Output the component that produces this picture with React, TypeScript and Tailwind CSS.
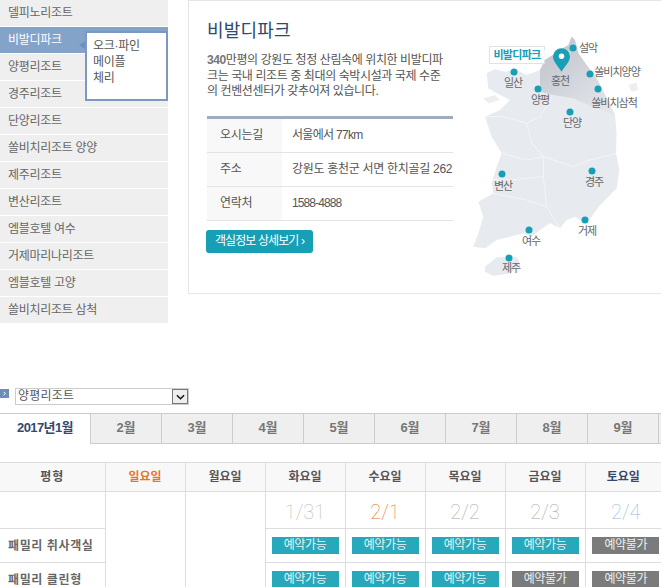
const resorts = [
  "델피노리조트",
  "비발디파크",
  "양평리조트",
  "경주리조트",
  "단양리조트",
  "쏠비치리조트 양양",
  "제주리조트",
  "변산리조트",
  "엠블호텔 여수",
  "거제마리나리조트",
  "엠블호텔 고양",
  "쏠비치리조트 삼척",
];

const months = ["2월", "3월", "4월", "5월", "6월", "7월", "8월", "9월"];

const info = [
  { label: "오시는길", value: "서울에서 77km", track: "tracking-[-0.7px]" },
  { label: "주소", value: "강원도 홍천군 서면 한치골길 262", track: "tracking-[-0.3px]" },
  { label: "연락처", value: "1588-4888", track: "tracking-[-0.9px]" },
];

// dot and label centres, relative to the map box
const pins = [
  { name: "설악", x: 113, y: 28, lx: 128, ly: 28 },
  { name: "쏠비치양양", x: 130, y: 54, lx: 157, ly: 52 },
  { name: "쏠비치삼척", x: 138, y: 69, lx: 154, ly: 83 },
  { name: "일산", x: 54, y: 52, lx: 53, ly: 63 },
  { name: "양평", x: 78, y: 69, lx: 80, ly: 80 },
  { name: "단양", x: 110, y: 92, lx: 112, ly: 103 },
  { name: "경주", x: 132, y: 151, lx: 134, ly: 162 },
  { name: "변산", x: 42, y: 154, lx: 43, ly: 166 },
  { name: "거제", x: 125, y: 200, lx: 127, ly: 211 },
  { name: "여수", x: 69, y: 210, lx: 71, ly: 221 },
  { name: "제주", x: 49, y: 238, lx: 51, ly: 248 },
];

function KoreaMap() {
  return (
    <svg viewBox="0 0 603 810" width="201" height="270" className="block">
      <defs>
        <linearGradient id="gangwon" x1="0.25" y1="0.1" x2="0.9" y2="0.9">
          <stop offset="0" stopColor="#c4c8ce" />
          <stop offset="1" stopColor="#e2e5ea" />
        </linearGradient>
      </defs>
      <path
        d="M80 160 105 148 135 155 170 150 200 165 240 150 255 120 300 90 325 75 335 50 345 60 355 100 380 135 410 175 440 235 465 285 470 340 468 400 478 450 470 505 445 530 420 555 395 590 375 610 345 590 320 600 300 625 270 610 240 630 215 650 190 640 150 650 110 660 75 685 40 680 55 640 70 590 55 545 100 520 95 490 110 440 125 400 95 350 75 290 120 270 150 240 120 225 85 205Z"
        fill="#e7eaee"
      />
      <path
        d="M240 150 255 120 300 90 325 75 335 50 345 60 355 100 380 135 410 175 440 235 465 285 400 262 340 235 280 225 240 215Z"
        fill="url(#gangwon)"
      />
      <path d="M75 740 110 712 170 712 182 735 150 760 100 768 75 755Z" fill="#e7eaee" />
      <path d="M505 195 530 188 535 210 515 215Z" fill="#eceef1" />
      <path d="M70 235 105 225 120 240 85 250Z" fill="#eceef1" />
      <path
        d="M75 290 130 290 200 310 240 290 280 225M200 310 215 370 250 410 200 420 125 400M250 410 250 470 260 560 300 625M250 410 340 440 390 420 468 400M250 470 150 480 95 480M100 520 200 540 260 560"
        fill="none"
        stroke="#f5f6f8"
        strokeWidth="3"
      />
    </svg>
  );
}

function Status({ open }: { open: boolean }) {
  return (
    <div
      className={`mx-auto flex h-[17px] w-[67px] items-center justify-center pb-px text-[12px] tracking-[-0.4px] text-[#e6f2f4] ${open ? "bg-[#27a8bb]" : "bg-[#7b7b7b]"}`}
    >
      {open ? "예약가능" : "예약불가"}
    </div>
  );
}

export default function App() {
  return (
    <div className="h-[587px] w-[661px] overflow-hidden bg-white font-['Liberation_Sans','Noto_Sans_CJK_KR',sans-serif] text-[12px] text-[#555]">
      <div className="flex h-[388px] items-start">
        {/* Resort menu */}
        <div className="relative w-[168px] shrink-0">
          {resorts.map((r) => (
            <div
              key={r}
              className={`flex h-[27px] items-center border-b border-white pb-px pl-2 tracking-[-0.3px] ${r === "비발디파크" ? "bg-[#84a3c9] text-white" : "bg-[#efefef] text-[#666]"}`}
            >
              {r}
            </div>
          ))}
          <div className="absolute left-[85px] top-[31px] h-[70px] w-[83px] border-2 border-[#7d99c1] bg-white pl-[6px] pt-[5px] leading-[16px] tracking-[-0.3px] text-[#555]">
            <p>오크·파인</p>
            <p>메이플</p>
            <p>체리</p>
            <span className="absolute -left-[8px] top-[8px] h-0 w-0 border-y-[4px] border-r-[6px] border-y-transparent border-r-[#6c90bd]" />
          </div>
        </div>

        {/* Resort info */}
        <div className="ml-5 flex h-[294px] flex-1 border-b border-l border-t border-[#e6e6e6]">
          <div className="ml-[18px] w-[246px] shrink-0">
            <h2 className="mt-[19px] text-[18px] leading-[22px] tracking-[0.2px] text-[#2c4a70]">비발디파크</h2>
            <p className="mt-[11px] whitespace-nowrap leading-[15.5px] tracking-[-0.4px] text-[#555]">
              <b className="text-[#777]">340</b>만평의 강원도 청정 산림속에 위치한 비발디파
              <br />
              크는 국내 리조트 중 최대의 숙박시설과 국제 수준
              <br />의 컨벤션센터가 갖추어져 있습니다.
            </p>
            <dl className="mt-[16px] border-t-[3px] border-[#9eadbd]">
              {info.map((row) => (
                <div key={row.label} className="flex h-[34px] border-b border-[#e3e3e3]">
                  <dt className="flex w-[75px] items-center bg-[#f8f8f8] pl-[13px] tracking-[-0.3px]">{row.label}</dt>
                  <dd className={`flex flex-1 items-center whitespace-nowrap pl-[10px] ${row.track}`}>{row.value}</dd>
                </div>
              ))}
            </dl>
            <button className="-ml-px mt-[9px] flex h-[23px] w-[107px] items-center justify-center rounded-[3px] bg-[#17a0b5] text-[12px] tracking-[-0.9px] text-white">
              객실정보 상세보기 ›
            </button>
          </div>
          <div className="relative ml-[7px] mt-[19px] h-[270px] w-[201px] shrink-0">
            <KoreaMap />
            {pins.map((p) => (
              <div key={p.name}>
                <span
                  className="absolute h-[7px] w-[7px] -translate-x-1/2 -translate-y-1/2 rounded-full bg-[#17a0b5]"
                  style={{ left: p.x, top: p.y }}
                />
                <span
                  className="absolute -translate-x-1/2 -translate-y-1/2 whitespace-nowrap text-[11px] leading-[13px] tracking-[-1px] text-[#666]"
                  style={{ left: p.lx, top: p.ly }}
                >
                  {p.name}
                </span>
              </div>
            ))}
            <span className="absolute left-[91px] top-[55px] text-[11px] leading-[13px] tracking-[-1px] text-[#666]">홍천</span>
            <div className="absolute left-[29px] top-[26px] flex h-[18px] w-[56px] items-center justify-center border border-[#e2e2e2] bg-white text-[11px] font-bold tracking-[-0.7px] text-[#17a0b5]">
              비발디파크
              <span className="absolute -right-[5px] top-[3px] h-0 w-0 border-y-[5px] border-l-[5px] border-y-transparent border-l-white" />
            </div>
            <svg viewBox="0 0 16 22" width="17" height="24" className="absolute left-[93px] top-[28px]">
              <path d="M8 0a8 8 0 0 1 8 8c0 4-4 8-8 14C4 16 0 12 0 8a8 8 0 0 1 8-8Z" fill="#17a0b5" />
              <circle cx="8" cy="7.5" r="2.6" fill="#fff" />
            </svg>
          </div>
        </div>
      </div>

      {/* Resort select */}
      <div className="flex h-[25px] items-start">
        <span className="mt-px flex h-[9px] w-[9px] items-center justify-center bg-[#6a8fbc]">
          <svg viewBox="0 0 6 6" width="5" height="5">
            <path d="M2 1l2 2-2 2" fill="none" stroke="#fff" strokeWidth="1.2" />
          </svg>
        </span>
        <div className="ml-[6px] flex h-[17px] w-[174px] items-center justify-between border border-[#ccc] pb-px pl-[2px] tracking-[0.2px] text-[#555]">
          양평리조트
          <span className="mt-px flex h-[15px] w-[16px] items-center justify-center border border-[#777] bg-[#eee]">
            <svg viewBox="0 0 10 6" width="9" height="6">
              <path d="M1 1l4 4 4-4" fill="none" stroke="#111" strokeWidth="1.6" />
            </svg>
          </span>
        </div>
      </div>

      {/* Month tabs */}
      <div className="flex h-[31px] border-t border-[#ccc] text-[13px] font-bold text-[#777]">
        <div className="flex w-[91px] items-center justify-center border-r border-[#ccc] pb-[2px] tracking-[-0.6px] text-[#34496e]">2017년1월</div>
        {months.map((m) => (
          <div key={m} className="flex w-[71px] items-center justify-center border-b border-r border-[#ccc] bg-[#efefef] pb-[2px]">
            {m}
          </div>
        ))}
        <div className="flex-1 border-b border-[#ccc] bg-[#efefef]" />
      </div>

      {/* Availability table */}
      <table className="mt-[18px] w-[661px] table-fixed border-collapse">
        <thead>
          <tr className="h-[29px] border-y border-[#ddd] bg-[#f8f8f8] font-bold">
            <th className="w-[105px] border-r border-[#ddd] text-[12px] tracking-[1px] text-[#555]">평형</th>
            <th className="w-[80px] border-r border-[#ddd] text-[12px] text-[#e5762a]">일요일</th>
            <th className="w-[80px] border-r border-[#ddd] text-[12px] text-[#555]">월요일</th>
            <th className="w-[80px] border-r border-[#ddd] text-[12px] text-[#555]">화요일</th>
            <th className="w-[80px] border-r border-[#ddd] text-[12px] text-[#555]">수요일</th>
            <th className="w-[80px] border-r border-[#ddd] text-[12px] text-[#555]">목요일</th>
            <th className="w-[80px] border-r border-[#ddd] text-[12px] text-[#555]">금요일</th>
            <th className="text-[12px] text-[#34496e]">토요일</th>
          </tr>
        </thead>
        <tbody className="text-center">
          <tr className="h-[37px] border-b border-[#ddd] font-['Roboto',sans-serif] text-[20px] font-thin">
            <td />
            <td rowSpan={3} className="border-x border-[#ddd]" />
            <td rowSpan={3} className="border-r border-[#ddd]" />
            <td className="border-r border-[#ddd] pt-[3px] text-[#bbb]">1/31</td>
            <td className="border-r border-[#ddd] pt-[3px] text-[#e0702a]">2/1</td>
            <td className="border-r border-[#ddd] pt-[3px] text-[#aaa]">2/2</td>
            <td className="border-r border-[#ddd] pt-[3px] text-[#aaa]">2/3</td>
            <td className="pl-[5px] pt-[3px] text-[#9db7d8]">2/4</td>
          </tr>
          {[
            { name: "패밀리 취사객실", days: [true, true, true, true, false] },
            { name: "패밀리 클린형", days: [true, true, true, false, false] },
          ].map((row) => (
            <tr key={row.name} className="h-[34px] border-b border-[#ddd]">
              <td className="pl-2 text-left font-bold tracking-[0.6px] text-[#666]">{row.name}</td>
              {row.days.map((open, i) => (
                <td key={i} className={i < 4 ? "border-r border-[#ddd]" : "pl-[5px]"}>
                  <Status open={open} />
                </td>
              ))}
            </tr>
          ))}
        </tbody>
      </table>
    </div>
  );
}
